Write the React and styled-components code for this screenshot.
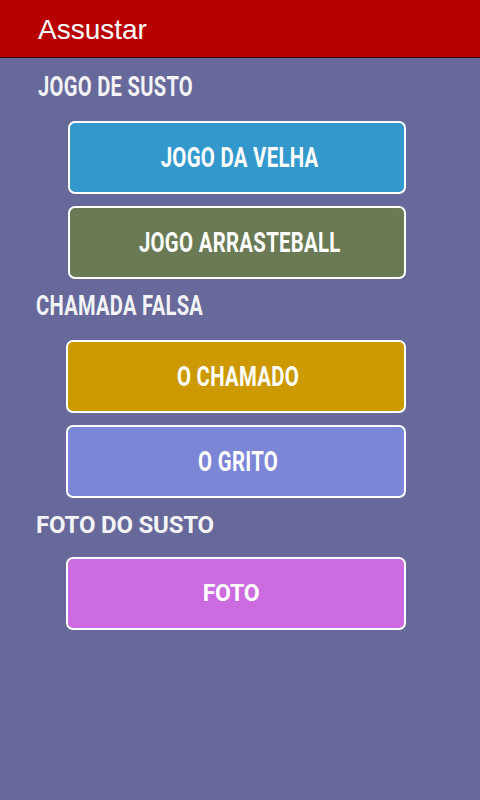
import React from "react";
import styled, { createGlobalStyle } from "styled-components";

const Global = createGlobalStyle`
  html, body { margin: 0; padding: 0; background: #67699a; }
  body { width: 480px; min-height: 800px; font-family: "Liberation Sans", Arial, sans-serif; }
`;

const Page = styled.div`
  width: 480px;
  min-height: 800px;
  background: #67699a;
  display: flex;
  flex-direction: column;
`;

const Header = styled.header`
  background: #b80000;
  border-bottom: 1px solid #3a0a0a;
  display: flex;
  align-items: flex-start;
  padding: 16px 0 0 38px;
  box-sizing: border-box;
  height: 58px;
`;

const Title = styled.h1`
  margin: 0;
  font-family: "Liberation Sans", Arial, sans-serif;
  font-weight: 400;
  font-size: 28px;
  color: #ffffff;
  line-height: 1;
`;

const Content = styled.main`
  display: flex;
  flex-direction: column;
  padding: 2px 74px 0 0;
`;

const Section = styled.section`
  display: flex;
  flex-direction: column;
  margin-top: 12px;
  padding-left: ${(p) => p.$indent}px;
`;

const Label = styled.h2`
  margin: 0 0 ${(p) => (p.$narrow ? 19 : 17)}px 0;
  font-family: "Roboto", "Liberation Sans", sans-serif;
  font-weight: 700;
  font-size: ${(p) => (p.$narrow ? 27 : 24)}px;
  line-height: 30px;
  color: #f4f4f8;
  letter-spacing: ${(p) => (p.$narrow ? "0.4px" : "-0.2px")};
  white-space: nowrap;
`;

const Squeeze = styled.span`
  display: inline-block;
  white-space: nowrap;
  transform: scaleX(${(p) => p.$scale});
  transform-origin: ${(p) => (p.$center ? "center" : "left")} center;
`;

const ButtonList = styled.div`
  display: flex;
  flex-direction: column;
  gap: 12px;
  padding-left: 30px;
`;

const Button = styled.button`
  height: 73px;
  width: 100%;
  box-sizing: border-box;
  border: 2px solid #ffffff;
  border-radius: 7px;
  background: ${(p) => p.$bg};
  color: #ffffff;
  font-family: "Roboto", "Liberation Sans", sans-serif;
  font-weight: 700;
  font-size: ${(p) => (p.$narrow ? 28 : 23)}px;
  letter-spacing: ${(p) => (p.$narrow ? "0.4px" : "-0.2px")};
  display: flex;
  align-items: center;
  justify-content: center;
  padding: ${(p) => (p.$narrow ? "0 0 0 5px" : "0 10px 0 0")};
  cursor: pointer;
`;

const sections = [
  {
    label: "JOGO DE SUSTO",
    indent: 38,
    narrow: true,
    buttons: [
      { text: "JOGO DA VELHA", bg: "#3399cc" },
      { text: "JOGO ARRASTEBALL", bg: "#6a7a55" },
    ],
  },
  {
    label: "CHAMADA FALSA",
    indent: 36,
    narrow: true,
    buttons: [
      { text: "O CHAMADO", bg: "#cc9900" },
      { text: "O GRITO", bg: "#7b86d6" },
    ],
  },
  {
    label: "FOTO DO SUSTO",
    indent: 36,
    narrow: false,
    buttons: [{ text: "FOTO", bg: "#cc6be0" }],
  },
];

export default function App() {
  return (
    <Page>
      <Global />
      <Header>
        <Title>Assustar</Title>
      </Header>
      <Content>
        {sections.map((s) => (
          <Section key={s.label} $indent={s.indent}>
            <Label $narrow={s.narrow}>
              <Squeeze $scale={s.narrow ? 0.745 : 1}>{s.label}</Squeeze>
            </Label>
            <ButtonList>
              {s.buttons.map((b) => (
                <Button key={b.text} $bg={b.bg} $narrow={s.narrow}>
                  <Squeeze $scale={s.narrow ? 0.727 : 1} $center>
                    {b.text}
                  </Squeeze>
                </Button>
              ))}
            </ButtonList>
          </Section>
        ))}
      </Content>
    </Page>
  );
}
